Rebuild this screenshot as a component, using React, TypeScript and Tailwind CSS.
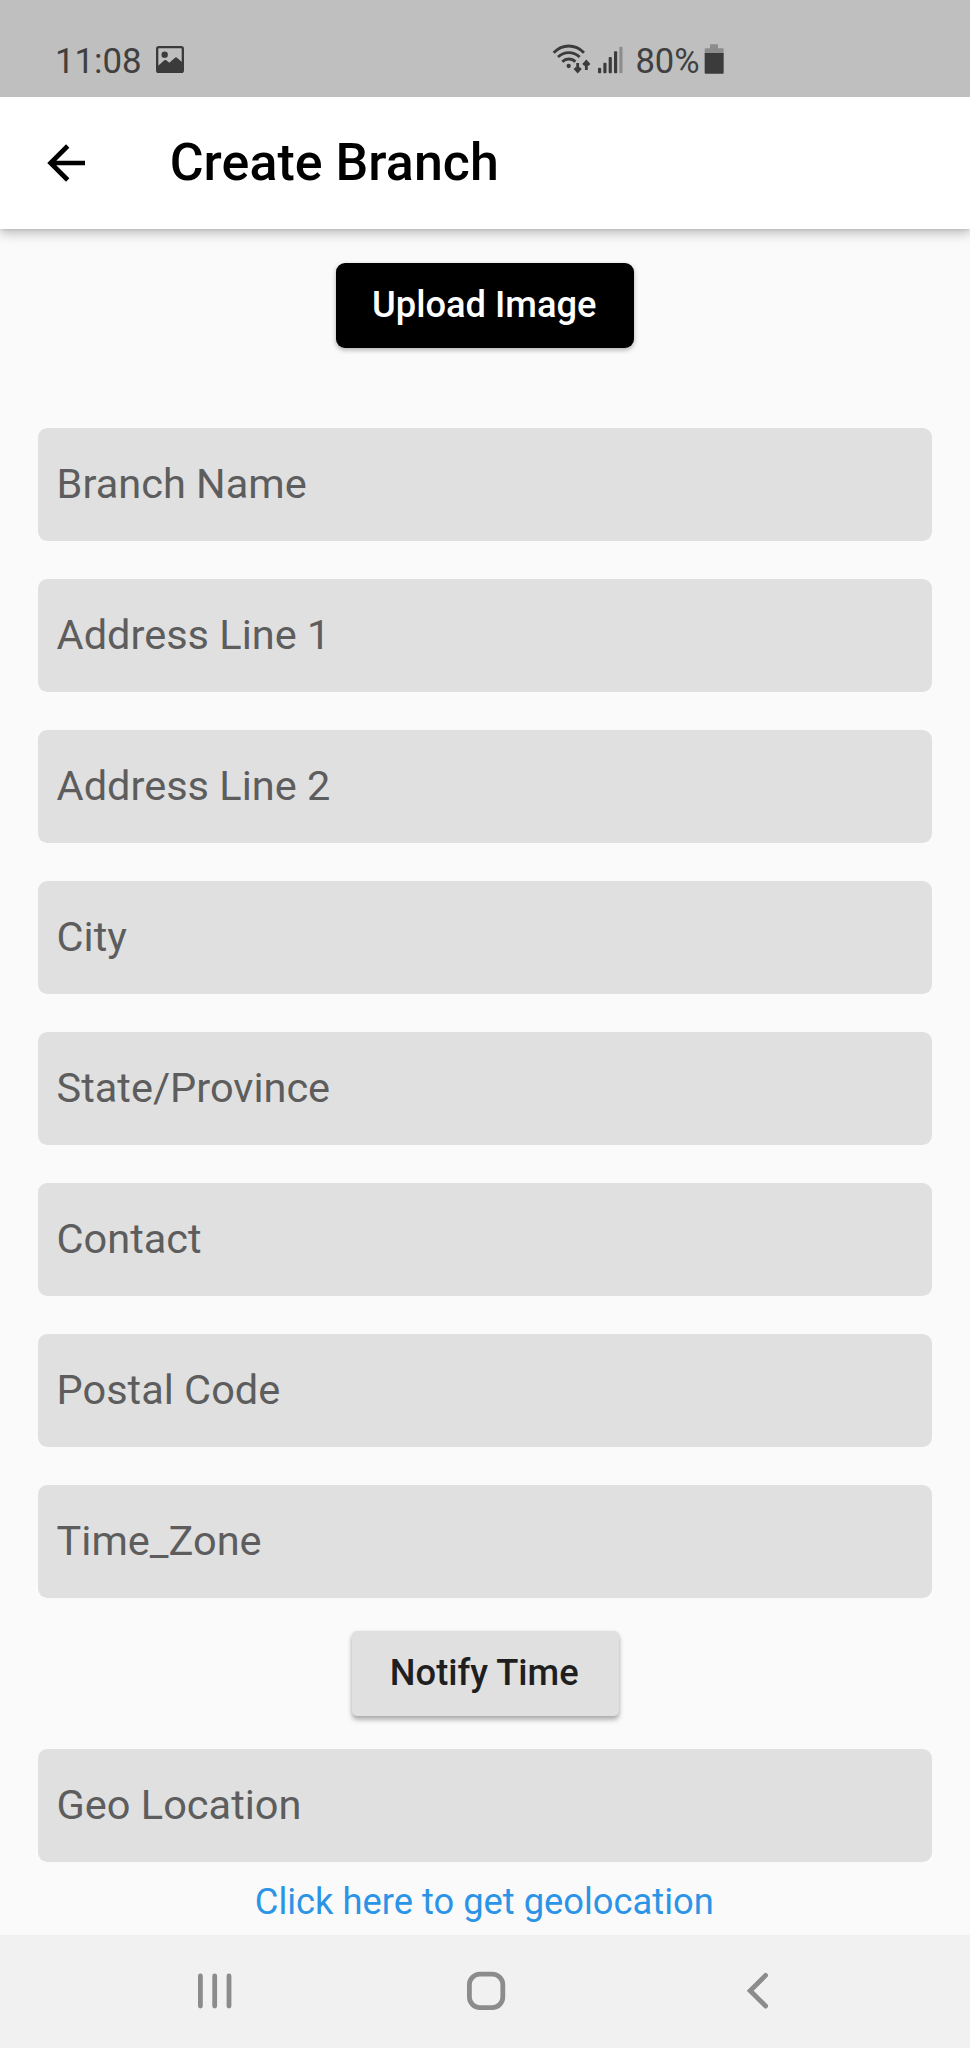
const BEFORE_NOTIFY = [
  "Branch Name",
  "Address Line 1",
  "Address Line 2",
  "City",
  "State/Province",
  "Contact",
  "Postal Code",
  "Time_Zone",
];

function Field({ label }: { label: string }) {
  return (
    <div className="flex h-[113.1px] w-full shrink-0 items-center rounded-[9.4px] bg-[#e0e0e0] pb-[1px] pl-[18.9px] text-[41.5px] leading-[48px] text-[#5d5d5d]">
      {label}
    </div>
  );
}

function PictureIcon() {
  return (
    <svg className="ml-[14.8px] mt-[3px] h-[27px] w-[28px]" viewBox="0 0 84 81">
      <rect x="3.5" y="3.5" width="77" height="75" rx="5" fill="none" stroke="#3b3b3b" strokeWidth="7" />
      <circle cx="26" cy="26" r="9.5" fill="#3b3b3b" />
      <path d="M3 62 L25 43 Q28 41 31 43 L40 50 L57 35 Q60 33 63 35 L81 51 V76 Q81 79 78 79 H6 Q3 79 3 76 Z" fill="#3b3b3b" />
    </svg>
  );
}

function ConnectivityIcons() {
  return (
    <svg className="-mt-[1px] h-[33px] w-[73px]" viewBox="60 35 219 99" fill="none">
      <g stroke="#3b3b3b" strokeWidth="8.5">
        <path d="M71 67 Q91 47 116 47 Q142 47 162 67" />
        <path d="M84 80 Q98 67 116 67 Q135 67 149 80" />
        <path d="M97 94 Q105 86 116 86 Q128 86 136 94" />
        <path d="M143 98 V122 M134 113 L143 123 L152 113" />
        <path d="M169 119 V95 M160 104 L169 94 L178 104" />
      </g>
      <circle cx="116" cy="107" r="6.5" fill="#3b3b3b" />
      <g fill="#3b3b3b">
        <rect x="204" y="112" width="9.5" height="17" rx="3" />
        <rect x="220" y="97" width="9.5" height="32" rx="3" />
        <rect x="236" y="80" width="9.5" height="49" rx="3" />
        <rect x="252" y="63" width="9.5" height="66" rx="3" />
      </g>
      <rect x="268" y="49" width="9.5" height="80" rx="3" fill="#8c8c8c" />
    </svg>
  );
}

function BatteryIcon() {
  return (
    <svg className="ml-[4px] mt-[1px] h-[30px] w-[20px]" viewBox="0 0 60 90">
      <path d="M18 3 Q18 1 20 1 H40 Q42 1 42 3 V13 H56 Q59 13 59 16 V28 H2 V16 Q2 13 5 13 H18 Z" fill="#8c8c8c" />
      <path d="M2 27 H59 V86 Q59 89 56 89 H5 Q2 89 2 86 Z" fill="#3b3b3b" />
    </svg>
  );
}

export default function App() {
  return (
    <div className="flex h-[2048px] w-[970px] flex-col overflow-hidden bg-[#fafafa] font-[Roboto,sans-serif]">
      <div className="relative z-20 flex h-[97px] shrink-0 items-start bg-[#bfbfbf] pt-[43px] text-[#404040]">
        <div className="flex w-[550px] items-start pl-[55px]">
          <span className="w-[86.7px] text-[34.8px] leading-[36px]">11:08</span>
          <PictureIcon />
        </div>
        <ConnectivityIcons />
        <span className="ml-[12.4px] text-[34.6px] leading-[36px]">80%</span>
        <BatteryIcon />
      </div>

      <header className="z-10 flex h-[132px] shrink-0 items-center bg-white shadow-[0_5px_10px_rgba(0,0,0,0.22),0_1px_3px_rgba(0,0,0,0.1)]">
        <svg className="ml-[47px] h-[38px] w-[38px]" viewBox="0 0 38 38" fill="none" stroke="#000" strokeWidth="4.7">
          <path d="M38 19 H4 M20.7 2 L3.6 19 L20.7 36" />
        </svg>
        <h1 className="ml-[84.7px] text-[51.86px] font-medium leading-[60px] tracking-[0.07px] text-black">
          Create Branch
        </h1>
      </header>

      <main className="flex flex-1 flex-col items-center px-[37.7px] pt-[34.3px]">
        <button className="flex h-[85px] w-[298px] shrink-0 items-center justify-center rounded-[9px] bg-black pb-[1px] pr-[1.5px] text-[36.3px] font-medium leading-[42px] text-white shadow-[0_2px_5px_rgba(0,0,0,0.3)]">
          Upload Image
        </button>

        <div className="mt-[80.1px] flex w-full flex-col gap-[37.8px]">
          {BEFORE_NOTIFY.map((label) => (
            <Field key={label} label={label} />
          ))}
        </div>

        <button className="mb-[33px] mt-[32.8px] flex h-[85px] w-[267px] shrink-0 items-center justify-center rounded-[5px] bg-[#e0e0e0] pb-[1px] pr-[1.5px] text-[36.3px] font-medium leading-[42px] text-[#1f1f1f] shadow-[0_4px_5px_rgba(0,0,0,0.27),0_1px_4px_rgba(0,0,0,0.1)]">
          Notify Time
        </button>

        <Field label="Geo Location" />
        <a className="mt-[20px] pr-[1.5px] text-[36.3px] leading-[40px] text-[#2b94e6]">
          Click here to get geolocation
        </a>
      </main>

      <nav className="flex h-[113.5px] shrink-0 items-center bg-[#f1f1f1]">
        <svg className="ml-[197px] h-[38px] w-[36px]" viewBox="0 0 36 38" stroke="#8c8c8c" strokeWidth="4.8" strokeLinecap="round">
          <path d="M3.4 4 V34 M17.7 4 V34 M32 4 V34" />
        </svg>
        <svg className="ml-[233px] h-[40px] w-[40px]" viewBox="0 0 40 40" fill="none" stroke="#8c8c8c" strokeWidth="4.8">
          <rect x="3.4" y="3.2" width="33.4" height="33.4" rx="10.5" />
        </svg>
        <svg className="ml-[241px] h-[38px] w-[24px]" viewBox="0 0 24 38" fill="none" stroke="#8c8c8c" strokeWidth="4.8" strokeLinecap="round">
          <path d="M18.6 3.4 L3.2 18.8 L18.6 34" />
        </svg>
      </nav>
    </div>
  );
}
